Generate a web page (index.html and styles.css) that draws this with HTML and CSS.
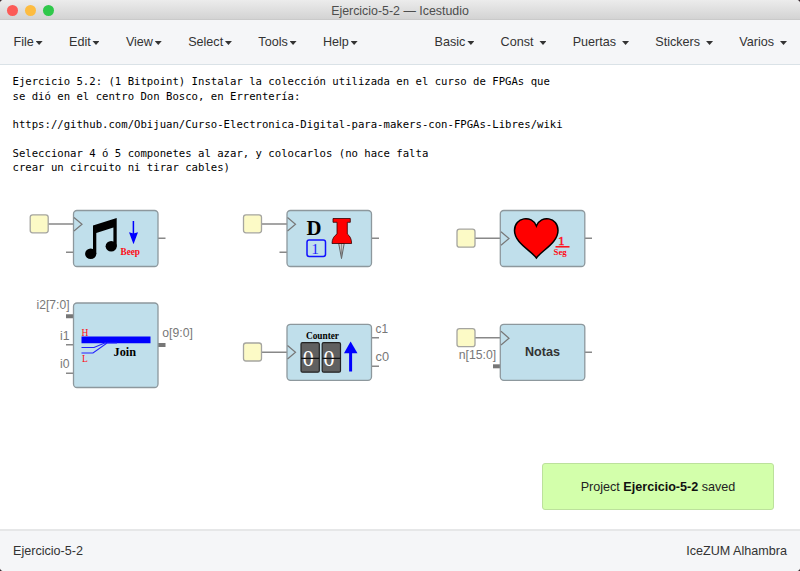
FILE: index.html
```html
<!DOCTYPE html>
<html lang="es">
<head>
<meta charset="utf-8">
<title>Ejercicio-5-2 — Icestudio</title>
<link rel="stylesheet" href="styles.css">
</head>
<body>
<div class="window">
  <header class="titlebar">
    <div class="lights"><span class="light close"></span><span class="light minimize"></span><span class="light maximize"></span></div>
    <div class="title">Ejercicio-5-2 — Icestudio</div>
  </header>
  <nav class="menubar">
    <div class="menu">
      <span class="item">File<i class="caret"></i></span>
      <span class="item">Edit<i class="caret"></i></span>
      <span class="item">View<i class="caret"></i></span>
      <span class="item">Select<i class="caret"></i></span>
      <span class="item">Tools<i class="caret"></i></span>
      <span class="item">Help<i class="caret"></i></span>
    </div>
    <div class="menu collections">
      <span class="item basic">Basic<i class="caret"></i></span>
      <span class="item">Const<i class="caret"></i></span>
      <span class="item">Puertas<i class="caret"></i></span>
      <span class="item">Stickers<i class="caret"></i></span>
      <span class="item">Varios<i class="caret"></i></span>
    </div>
  </nav>
  <main class="canvas">
<pre class="notes">Ejercicio 5.2: (1 Bitpoint) Instalar la colección utilizada en el curso de FPGAs que
se dió en el centro Don Bosco, en Errentería:

https://github.com/Obijuan/Curso-Electronica-Digital-para-makers-con-FPGAs-Libres/wiki

Seleccionar 4 ó 5 componetes al azar, y colocarlos (no hace falta
crear un circuito ni tirar cables)</pre>
    <svg class="diagram" viewBox="0 65 800 464" width="800" height="464">
      <!-- Beep -->
      <g>
        <path class="wire" d="M48 224H73M66 252.3H73M158 238.2H165.5"/>
        <rect class="pin" x="30.2" y="214.8" width="18" height="18" rx="2.5"/>
        <rect class="block" x="73.5" y="210.5" width="84.5" height="56" rx="3.5"/>
        <path class="clock" d="M74 217.5L82 224.3L74 231"/>
        <path d="M93 225.5L116.7 218V246H113.4V227.5L96.3 233V254H93Z"/>
        <ellipse cx="90.7" cy="253.8" rx="5.6" ry="5.2"/>
        <ellipse cx="111.2" cy="246.3" rx="5.6" ry="5.2"/>
        <path class="blue-line" d="M133.4 221V235"/>
        <path class="blue" d="M129 232.3L133.4 233.5L138 232.3L133.5 244.2Z"/>
        <text class="serif red bold" x="120.5" y="254.8" font-size="9.8" textLength="19.5" lengthAdjust="spacingAndGlyphs">Beep</text>
      </g>
      <!-- D flip-flop -->
      <g>
        <path class="wire" d="M261 224H287M279.5 252.3H287M371.5 238.2H379"/>
        <rect class="pin" x="243.5" y="214.8" width="18" height="18" rx="2.5"/>
        <rect class="block" x="287" y="210.5" width="84.5" height="56" rx="3.5"/>
        <path class="clock" d="M287.5 217.5L295.5 224.3L287.5 231"/>
        <text class="serif bold" x="306.5" y="234.8" font-size="21.5" textLength="15" lengthAdjust="spacingAndGlyphs">D</text>
        <rect class="number-box" x="307" y="240" width="18.5" height="16.5" rx="2.2"/>
        <text class="serif bluetext" x="311.3" y="253.6" font-size="15.5">1</text>
        <path d="M338.7 243.5H344.2L341.5 258.5Z" fill="#ccc" stroke="#444" stroke-width=".8"/>
        <path d="M341.5 244V258" stroke="#777" stroke-width=".7"/>
        <path d="M333 218.5H350.3V222.3H347.3V234C350 236 351.6 239 351.6 243.5H332C332 239 334 236 337 234V222.3H333Z" fill="#f00" stroke="#300" stroke-width=".8"/>
      </g>
      <!-- Heartbeat -->
      <g>
        <path class="wire" d="M475 238.2H500M585 238.2H592"/>
        <rect class="pin" x="457" y="229.2" width="18" height="18" rx="2.5"/>
        <rect class="block" x="500.3" y="210.5" width="84.5" height="56" rx="3.5"/>
        <path class="clock" d="M501 231.7L509 238.5L501 245.2"/>
        <path d="M536.4 258C531 250.5 514.5 243 514.5 230.5C514.5 217 532 214.5 536.4 226C541 214.5 558 217 558 230.5C558 243 541.5 250.5 536.4 258Z" fill="#f00" stroke="#000" stroke-width="1.5"/>
        <text class="serif red" x="558" y="245.3" font-size="13.5" stroke="#ff0a14" stroke-width=".4">1</text>
        <path d="M555.5 246.8H569.5" stroke="#ff0a14" stroke-width="1.5"/>
        <text class="serif red bold" x="553.5" y="255.3" font-size="8.5" textLength="13.2" lengthAdjust="spacingAndGlyphs">Seg</text>
      </g>
      <!-- Join -->
      <g>
        <path class="wire" d="M66 344.8H73M66 373.3H73"/>
        <path class="bus" d="M66 316.2H73M158 345H165.5"/>
        <rect class="block" x="73.5" y="303" width="84.5" height="84.5" rx="3.5"/>
        <text class="port" x="36.5" y="308.8" textLength="33" lengthAdjust="spacingAndGlyphs">i2[7:0]</text>
        <text class="port" x="60" y="340" textLength="9.5" lengthAdjust="spacingAndGlyphs">i1</text>
        <text class="port" x="60" y="368.4" textLength="9.5" lengthAdjust="spacingAndGlyphs">i0</text>
        <text class="port" x="162.3" y="337.3" textLength="30.5" lengthAdjust="spacingAndGlyphs">o[9:0]</text>
        <text class="serif red" x="81.5" y="335.8" font-size="9.5">H</text>
        <text class="serif red" x="82" y="362" font-size="9.5">L</text>
        <path class="blue" d="M81.5 336.5H150.5V343.3H81.5Z"/>
        <path d="M81.5 347.5H94L106 342.5M81.5 353H93L107 343H117" fill="none" stroke="#22f" stroke-width="1.1"/>
        <text class="serif bold" x="113.5" y="356.2" font-size="12.8" textLength="22.5" lengthAdjust="spacingAndGlyphs">Join</text>
      </g>
      <!-- Counter -->
      <g>
        <path class="wire" d="M261 352.2H287M371.5 337.7H379M371.5 366.3H379"/>
        <rect class="pin" x="243.5" y="343" width="18" height="18" rx="2.5"/>
        <rect class="block" x="287" y="324.3" width="84.5" height="56" rx="3.5"/>
        <path class="clock" d="M287.5 345.5L295.5 352.3L287.5 359"/>
        <text class="serif bold" x="306" y="339" font-size="9.5" textLength="33" lengthAdjust="spacingAndGlyphs">Counter</text>
        <rect class="digit" x="301" y="342.6" width="18.3" height="29.6" rx="1.5"/>
        <rect class="digit" x="322.2" y="342.6" width="18.3" height="29.6" rx="1.5"/>
        <text class="serif digit-text" x="302.8" y="366" font-size="23" textLength="11" lengthAdjust="spacingAndGlyphs">0</text>
        <text class="serif digit-text" x="323.5" y="366" font-size="23" textLength="11" lengthAdjust="spacingAndGlyphs">0</text>
        <path d="M301 358.3H319.3M322.2 358.3H340.5" stroke="#111" stroke-width="1.3"/>
        <path d="M350.6 371.5V350" stroke="#00f" stroke-width="3"/>
        <path class="blue" d="M344 353.2L350.6 341.5L357.5 353.2Z"/>
        <text class="port" x="375.5" y="333.3" textLength="12.5" lengthAdjust="spacingAndGlyphs">c1</text>
        <text class="port" x="375.5" y="361.3" textLength="13.5" lengthAdjust="spacingAndGlyphs">c0</text>
      </g>
      <!-- Notas -->
      <g>
        <path class="wire" d="M475 337.8H500M585 352.2H592"/>
        <path class="bus" d="M493 366.3H500"/>
        <rect class="pin" x="457" y="328.7" width="18" height="18" rx="2.5"/>
        <rect class="block" x="500.3" y="324.3" width="84.5" height="56" rx="3.5"/>
        <path class="clock" d="M501 331.3L509 338.3L501 345"/>
        <text class="port" x="458.7" y="358.8" textLength="37.5" lengthAdjust="spacingAndGlyphs">n[15:0]</text>
        <text class="label" x="525" y="356.2" textLength="35" lengthAdjust="spacingAndGlyphs">Notas</text>
      </g>
    </svg>
    <div class="toast"><span>Project <b>Ejercicio-5-2</b> saved</span></div>
  </main>
  <footer class="statusbar"><span>Ejercicio-5-2</span><span>IceZUM Alhambra</span></footer>
</div>
</body>
</html>
```
FILE: styles.css
```css
* { box-sizing: border-box; }
body {
  margin: 0;
  background: #3a2a30;
  color: #333;
  font-family: "Liberation Sans", Arial, sans-serif;
  font-size: 12.6px;
}
.window {
  display: flex;
  flex-direction: column;
  width: 800px;
  height: 571px;
  overflow: hidden;
  border-radius: 4px;
  background: #fff;
}
.titlebar {
  display: grid;
  grid-template-columns: 60px 1fr 60px;
  align-items: center;
  height: 20px;
  background: linear-gradient(#ececec, #d3d3d3);
  border-bottom: 1px solid #cacaca;
}
.lights { display: flex; gap: 7px; padding-left: 7px; }
.light { width: 11px; height: 11px; border-radius: 50%; }
.close { background: #fc5b57; }
.minimize { background: #fdbc40; }
.maximize { background: #2fc84a; }
.title {
  text-align: center;
  color: #4d4d4d;
  font-size: 12.4px;
  line-height: 19px;
  padding-top: 2px;
}
.menubar {
  display: flex;
  justify-content: space-between;
  align-items: center;
  height: 45px;
  padding: 0 13px 0 13.5px;
  background: #f5f6f8;
  border-bottom: 1px solid #dae2e7;
}
.menu { display: flex; gap: 26.4px; }
.collections { gap: 26.2px; }
.item { display: flex; align-items: center; gap: 1.8px; line-height: 16px; }
.collections .item { gap: 6px; }
.collections .basic { gap: 2px; }
.caret {
  width: 7px;
  height: 4px;
  margin-top: 2px;
  background: #333;
  clip-path: polygon(0 0, 100% 0, 50% 100%);
}
.canvas { position: relative; height: 464px; background: #fff; }
.notes {
  position: absolute;
  left: 12.5px;
  top: 10.4px;
  margin: 0;
  color: #000;
  font: 10.64px/14.25px "DejaVu Sans Mono", monospace;
}
.diagram { display: block; }
.wire { fill: none; stroke: #888; stroke-width: 1.4; }
.bus { stroke: #777; stroke-width: 4; }
.pin { fill: #fcfac6; stroke: #a5a5a0; stroke-width: 1.3; }
.block { fill: #c0dfeb; stroke: #8d989d; stroke-width: 1.3; }
.clock { fill: none; stroke: #777; stroke-width: 1.2; }
.port { fill: #777; font-size: 13px; }
.label { fill: #333; font-size: 13px; font-weight: bold; }
.serif { font-family: "Liberation Serif", serif; }
.bold { font-weight: bold; }
.red { fill: #ff0a14; }
.blue { fill: #00f; }
.bluetext { fill: #22f; }
.blue-line { stroke: #00f; stroke-width: 1.5; }
.number-box { fill: none; stroke: #11f; stroke-width: 1.5; }
.digit { fill: #606060; stroke: #222; stroke-width: 1.2; }
.digit-text { fill: #fff; }
.toast {
  position: absolute;
  left: 542px;
  top: 398px;
  display: flex;
  align-items: center;
  justify-content: center;
  width: 232px;
  height: 47px;
  background: #d3ffab;
  border: 1.5px solid #bce19c;
  border-radius: 3px;
  color: #222;
}
.toast b { color: #111; }
.statusbar {
  display: flex;
  justify-content: space-between;
  align-items: center;
  height: 42px;
  padding: 0 13px 1px;
  background: #f5f6f8;
  border-top: 2px solid #e6e7e8;
}
```
